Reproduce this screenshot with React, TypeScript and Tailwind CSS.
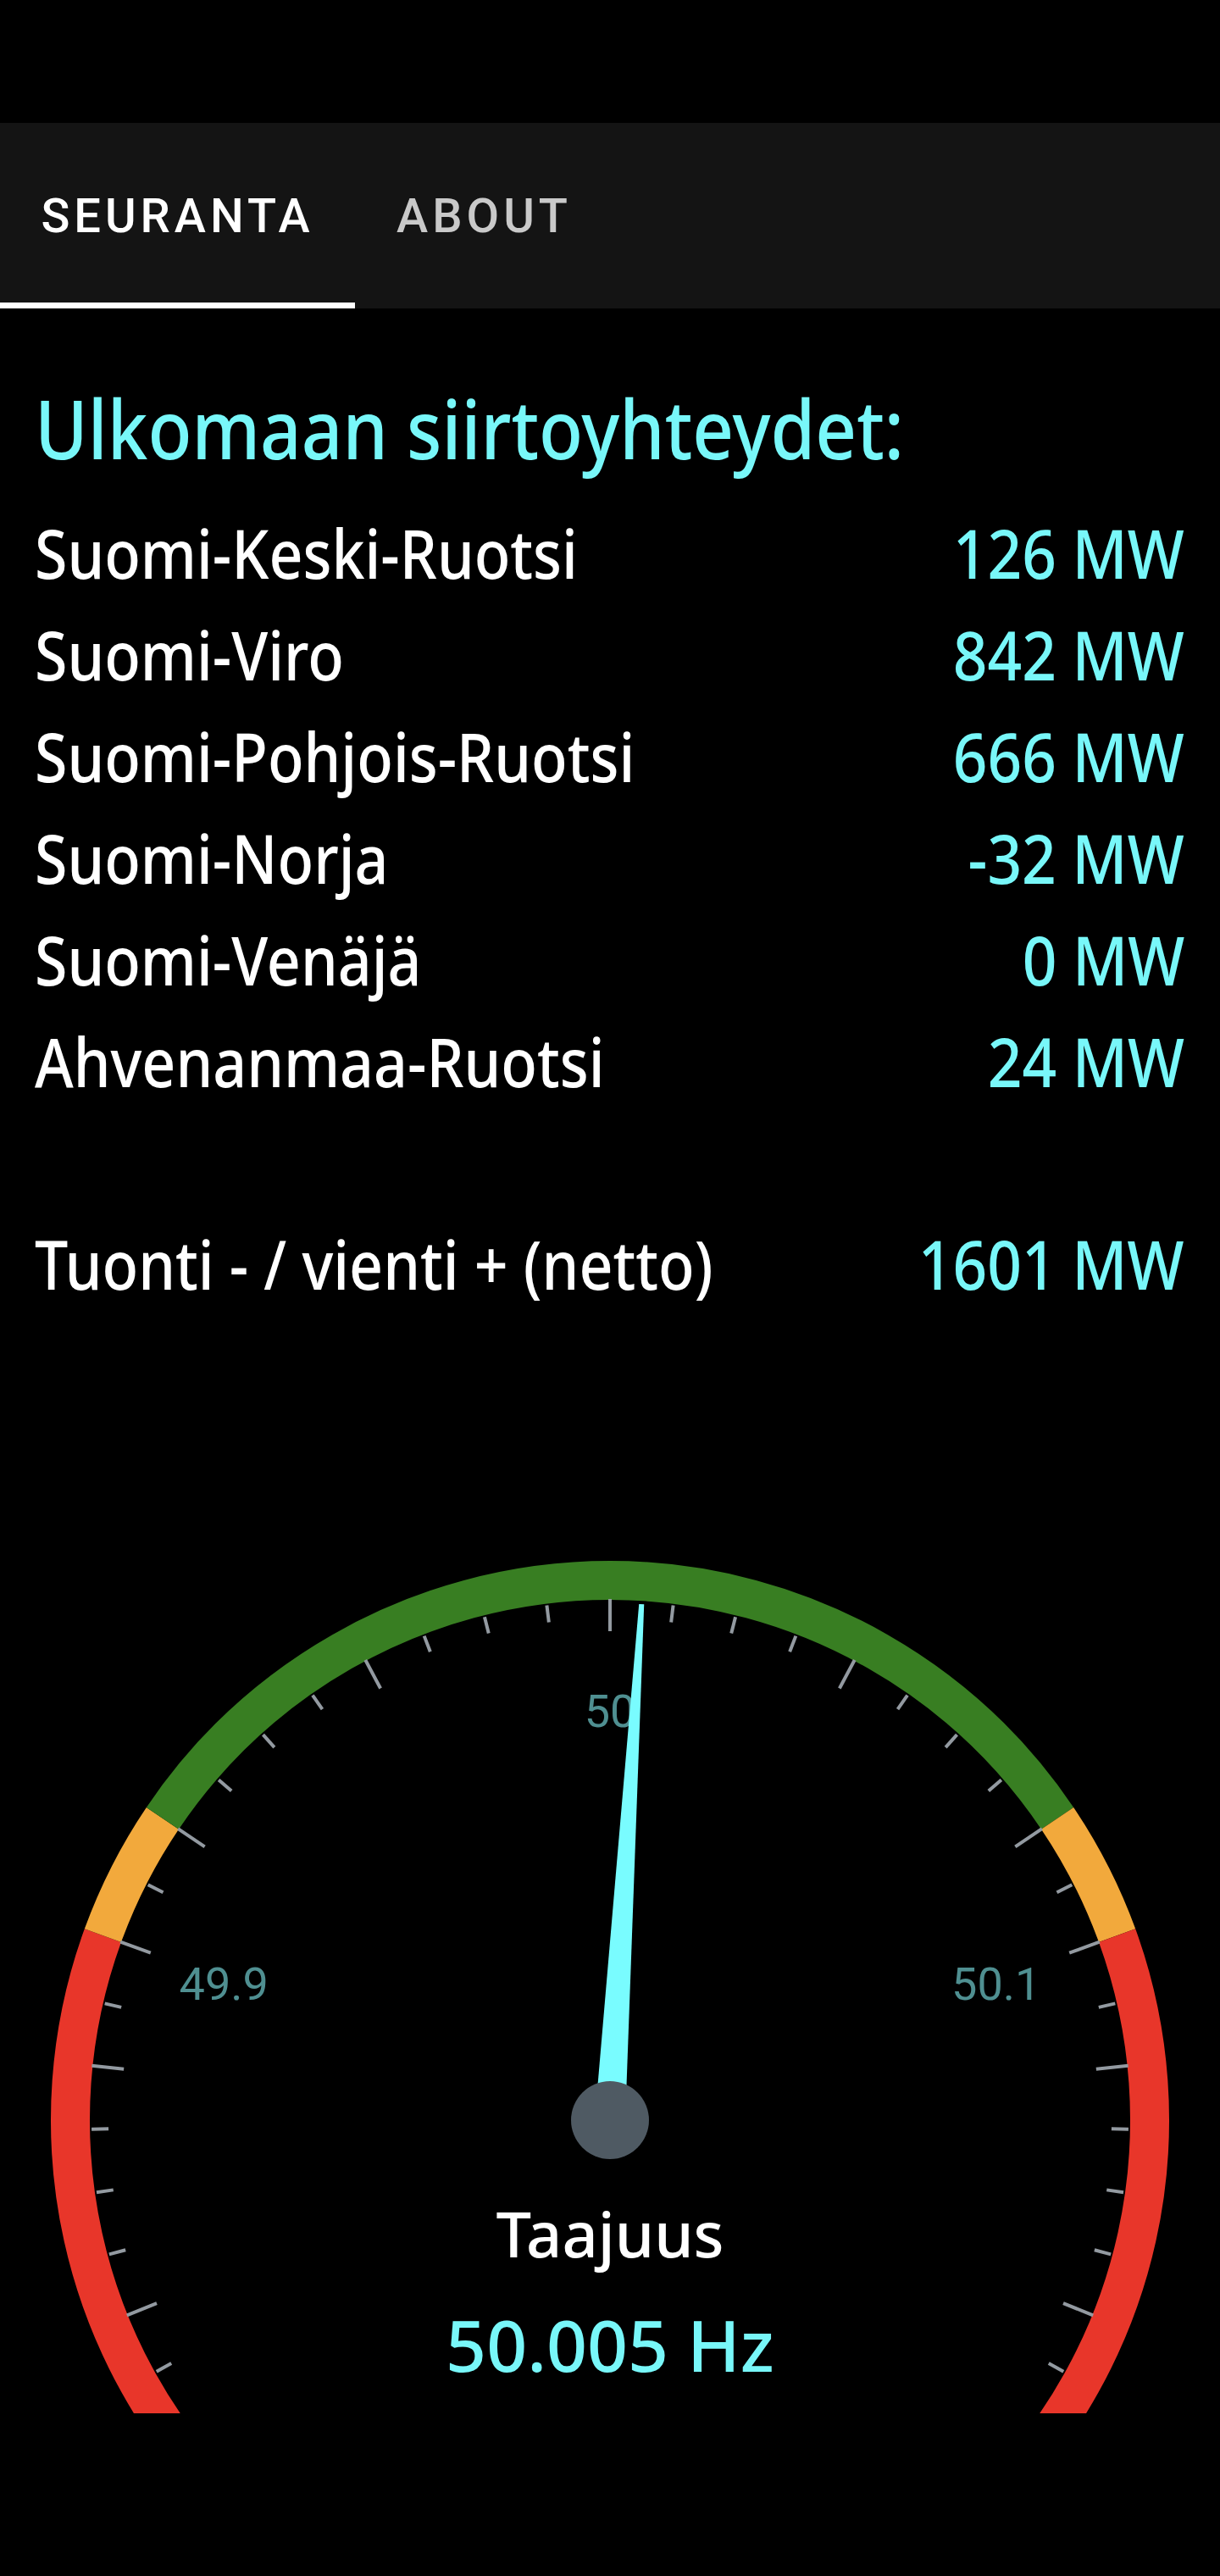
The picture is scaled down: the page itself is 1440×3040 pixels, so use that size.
const links = [
  { name: "Suomi-Keski-Ruotsi", value: "126 MW" },
  { name: "Suomi-Viro", value: "842 MW" },
  { name: "Suomi-Pohjois-Ruotsi", value: "666 MW" },
  { name: "Suomi-Norja", value: "-32 MW" },
  { name: "Suomi-Venäjä", value: "0 MW" },
  { name: "Ahvenanmaa-Ruotsi", value: "24 MW" },
];

// gauge geometry, in page pixels
const CX = 720;
const CY = 2502;
const TOP = 1554;
const HEIGHT = 1294;
const R = 637;

function polar(r: number, deg: number) {
  const a = (deg * Math.PI) / 180;
  return [CX + r * Math.cos(a), CY - r * Math.sin(a)];
}

function arc(from: number, to: number) {
  const [x1, y1] = polar(R, from);
  const [x2, y2] = polar(R, to);
  const large = from - to > 180 ? 1 : 0;
  return `M ${x1} ${y1} A ${R} ${R} 0 ${large} 1 ${x2} ${y2}`;
}

const zones = [
  { from: 225, to: 160, color: "#e8362a" },
  { from: 160, to: 146, color: "#f2a93c" },
  { from: 146, to: 34, color: "#387e22" },
  { from: 34, to: 20, color: "#f2a93c" },
  { from: 20, to: -45, color: "#e8362a" },
];

const ticks = Array.from({ length: 35 }, (_, i) => i - 17);

function Gauge({ value }: { value: number }) {
  // 0.01 Hz per 7 degrees
  const angle = ((value - 50) / 0.01) * 7;
  return (
    <div className="relative mt-[3px] h-[1294px]">
      <svg width={1440} height={HEIGHT} viewBox={`0 ${TOP} 1440 ${HEIGHT}`} className="block">
        {zones.map((z) => (
          <path key={z.from} d={arc(z.from, z.to)} stroke={z.color} strokeWidth={46} fill="none" />
        ))}
        {ticks.map((k) => {
          const long = k % 4 === 0 || Math.abs(k) === 10;
          const deg = 90 - 7 * k;
          const [x1, y1] = polar(long ? 615 : 612, deg);
          const [x2, y2] = polar(long ? 577 : 592, deg);
          return <line key={k} x1={x1} y1={y1} x2={x2} y2={y2} stroke="#939aa1" strokeWidth={4} />;
        })}
        {[
          { label: "49.9", deg: 160, dy: 5 },
          { label: "50", deg: 90, dy: 2 },
          { label: "50.1", deg: 20, dy: 5 },
        ].map((l) => {
          const [x, y] = polar(485, l.deg);
          return (
            <text
              key={l.label}
              x={x}
              y={y + l.dy}
              textAnchor="middle"
              dominantBaseline="central"
              fill="#4f8f91"
              fontSize={54}
              fontWeight={400}
              fontFamily="Roboto, sans-serif"
            >
              {l.label}
            </text>
          );
        })}
        <polygon
          points={`${CX - 18},${CY} ${CX - 3},${CY - 610} ${CX + 3},${CY - 610} ${CX + 18},${CY}`}
          fill="#79fcff"
          transform={`rotate(${angle} ${CX} ${CY})`}
        />
        <circle cx={CX} cy={CY} r={46} fill="#4f5a63" />
      </svg>
      <div className="absolute left-0 right-0 top-[1034px] flex flex-col items-center">
        <div className="h-[96px] text-[74px] leading-[96px] text-white">Taajuus</div>
        <div className="mt-[28px] h-[110px] text-[84px] leading-[110px] text-[#78f7f9]">50.005 Hz</div>
      </div>
    </div>
  );
}

export default function App() {
  return (
    <div className="min-h-[3040px] bg-black font-['Noto_Sans',sans-serif] font-medium">
      <div className="h-[145px]" />

      {/* tabs */}
      <div className="flex h-[219px] bg-[#141414] font-['Roboto',sans-serif] text-[56px] font-medium uppercase tracking-[5px]">
        <div className="relative flex w-[419px] items-center justify-center text-white">
          Seuranta
          <span className="absolute bottom-0 left-0 h-[7px] w-full bg-white" />
        </div>
        <div className="flex w-[305px] items-center justify-center text-[#c9c9c9]">About</div>
      </div>

      <div className="pl-[41px] pr-[42px] pt-[77px]">
        <h1 className="h-[128px] origin-left scale-x-[0.887] text-[96px] leading-[128px] font-medium text-[#78f7f9]">
          Ulkomaan siirtoyhteydet:
        </h1>
        <div className="mt-[23px]">
          {links.map((l) => (
            <div key={l.name} className="flex h-[120px] items-center justify-between text-[80px] leading-[120px]">
              <span className="origin-left scale-x-[0.873] text-white">{l.name}</span>
              <span className="origin-right scale-x-[0.89] text-[#78f7f9]">{l.value}</span>
            </div>
          ))}
        </div>
        <div className="mt-[119px] flex h-[120px] items-center justify-between text-[80px] leading-[120px]">
          <span className="origin-left scale-x-[0.873] text-white">Tuonti - / vienti + (netto)</span>
          <span className="origin-right scale-x-[0.89] text-[#78f7f9]">1601 MW</span>
        </div>
      </div>

      <Gauge value={50.005} />
    </div>
  );
}
